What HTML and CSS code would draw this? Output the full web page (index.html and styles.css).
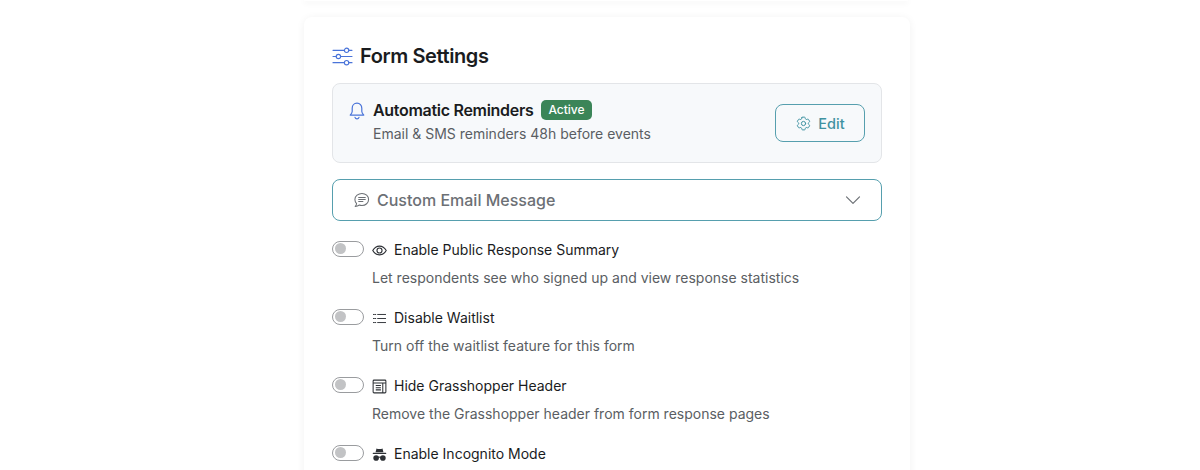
FILE: index.html
```html
<!DOCTYPE html>
<html lang="en">
<head>
    <meta charset="UTF-8">
    <title>Form Settings</title>
    <link rel="stylesheet" href="styles.css">
</head>
<body>
    <div class="page">
        <div class="prev-card"></div>

        <section class="card">
            <h2 class="card-title">
                <svg class="title-icon" viewBox="0 0 22 20" fill="none" stroke="currentColor" stroke-width="1.2" stroke-linecap="round">
                    <path d="M1 3.5h12M17.6 3.5H21"/>
                    <circle cx="15.3" cy="3.5" r="2.3"/>
                    <path d="M1 10h3.4M9 10h12"/>
                    <circle cx="6.7" cy="10" r="2.3"/>
                    <path d="M1 16.5h12M17.6 16.5H21"/>
                    <circle cx="15.3" cy="16.5" r="2.3"/>
                </svg>
                Form Settings
            </h2>

            <div class="reminders">
                <svg class="bell-icon" viewBox="0 0 16 18" fill="none" stroke="currentColor" stroke-width="1.2" stroke-linecap="round" stroke-linejoin="round">
                    <path d="M8 1.2c-2.9 0-4.800 2.200-4.800 5v3.300c0 1.200-.9 2.400-2 3.600h13.600c-1.100-1.200-2-2.400-2-3.600V6.200c0-2.800-1.900-5-4.800-5z"/>
                    <path d="M6 15.300c.3 1 1.100 1.500 2 1.500s1.700-.5 2-1.500"/>
                </svg>
                <div class="reminders-text">
                    <div class="reminders-head">
                        <span class="reminders-title">Automatic Reminders</span>
                        <span class="badge">Active</span>
                    </div>
                    <div class="reminders-sub">Email &amp; SMS reminders 48h before events</div>
                </div>
                <button class="edit-btn">
                    <svg class="gear-icon" viewBox="0 0 24 24" fill="none" stroke="currentColor" stroke-width="1.4" stroke-linecap="round" stroke-linejoin="round">
                        <path d="M9.594 3.940c.09-.542.56-.94 1.110-.94h2.593c.55 0 1.020.398 1.110.94l.213 1.281c.063.374.313.686.645.870.074.040.147.083.22.127.325.196.72.257 1.075.124l1.217-.456a1.125 1.125 0 0 1 1.370.49l1.296 2.247a1.125 1.125 0 0 1-.26 1.431l-1.003.827c-.293.241-.438.613-.43.992a7.723 7.723 0 0 1 0 .255c-.008.378.137.75.43.991l1.004.827c.424.35.534.955.26 1.430l-1.298 2.247a1.125 1.125 0 0 1-1.369.491l-1.217-.456c-.355-.133-.75-.072-1.076.124a6.470 6.470 0 0 1-.22.128c-.331.183-.581.495-.644.869l-.213 1.281c-.09.543-.56.94-1.110.94h-2.594c-.55 0-1.019-.398-1.110-.94l-.213-1.281c-.062-.374-.312-.686-.644-.87a6.520 6.520 0 0 1-.22-.127c-.325-.196-.72-.257-1.076-.124l-1.217.456a1.125 1.125 0 0 1-1.369-.49l-1.297-2.247a1.125 1.125 0 0 1 .26-1.431l1.004-.827c.292-.24.437-.613.43-.991a6.932 6.932 0 0 1 0-.255c.007-.38-.138-.751-.43-.992l-1.004-.827a1.125 1.125 0 0 1-.26-1.430l1.297-2.247a1.125 1.125 0 0 1 1.370-.491l1.216.456c.356.133.751.072 1.076-.124.072-.044.146-.086.22-.128.332-.183.582-.495.644-.869l.214-1.280z"/>
                        <circle cx="12" cy="12" r="3"/>
                    </svg>
                    Edit
                </button>
            </div>

            <div class="accordion">
                <svg class="chat-icon" viewBox="0 0 18 18" fill="none" stroke="currentColor" stroke-width="1.1" stroke-linecap="round" stroke-linejoin="round">
                    <path d="M9.500 1.500c3.900 0 7 2.800 7 6.400s-3.100 6.400-7 6.400c-1 0-1.900-.2-2.700-.5-1.300.9-2.700 1.400-4.500 1.500.9-.9 1.400-1.900 1.500-3.100C2.500 10.900 2 9.400 2 7.900 2 4.300 5.600 1.500 9.500 1.500z"/>
                    <path d="M6 5.900h7M6 8h7M6 10.100h4.500"/>
                </svg>
                <span class="accordion-label">Custom Email Message</span>
                <svg class="chevron" viewBox="0 0 16 10" fill="none" stroke="currentColor" stroke-width="1.2" stroke-linecap="round" stroke-linejoin="round">
                    <path d="M1.500 1.800L8 8.300l6.500-6.500"/>
                </svg>
            </div>

            <div class="option">
                <div class="option-row">
                    <span class="toggle"></span>
                    <svg class="option-icon" viewBox="0 0 16 16" fill="none" stroke="currentColor" stroke-width="1.2" stroke-linejoin="round">
                        <path d="M.8 8c1.800-3.100 4.300-4.700 7.200-4.700s5.400 1.600 7.200 4.700c-1.800 3.100-4.300 4.700-7.200 4.700S2.600 11.100.8 8z"/>
                        <circle cx="8" cy="8" r="2.700"/>
                    </svg>
                    <span class="option-label">Enable Public Response Summary</span>
                </div>
                <p class="option-desc">Let respondents see who signed up and view response statistics</p>
            </div>

            <div class="option">
                <div class="option-row">
                    <span class="toggle"></span>
                    <svg class="option-icon" viewBox="0 0 16 16" fill="none" stroke="currentColor" stroke-width="1" stroke-linecap="round">
                        <path d="M6 3.700h8.500M6 8h8.500M6 12.300h8.500"/>
                        <path d="M1.500 3.700h2.500M1.500 8h2.500M1.500 12.300h2.500" stroke-dasharray="1 .9"/>
                    </svg>
                    <span class="option-label">Disable Waitlist</span>
                </div>
                <p class="option-desc">Turn off the waitlist feature for this form</p>
            </div>

            <div class="option">
                <div class="option-row">
                    <span class="toggle"></span>
                    <svg class="option-icon" viewBox="0 0 16 16" fill="none" stroke="currentColor" stroke-width="1.1">
                        <rect x="1.200" y="1.200" width="13.600" height="13.600" rx="1"/>
                        <path d="M1.200 4.300h13.600M4 7h5.500M4 9.300h5.500M4 11.600h5.500M11.500 4.300v10.500"/>
                    </svg>
                    <span class="option-label">Hide Grasshopper Header</span>
                </div>
                <p class="option-desc">Remove the Grasshopper header from form response pages</p>
            </div>

            <div class="option">
                <div class="option-row">
                    <span class="toggle"></span>
                    <svg class="option-icon" viewBox="0 0 16 16" fill="currentColor">
                        <path d="M4.800 1.500c.9.4 1.900.5 3.200.5s2.300-.1 3.200-.5l1 4H3.800z"/>
                        <rect x=".8" y="6" width="14.400" height="1.500" rx=".6"/>
                        <circle cx="4.400" cy="11.700" r="3"/>
                        <circle cx="11.600" cy="11.700" r="3"/>
                        <rect x="6.500" y="10.300" width="3" height="1.100"/>
                    </svg>
                    <span class="option-label">Enable Incognito Mode</span>
                </div>
            </div>
        </section>
    </div>
</body>
</html>
```

FILE: styles.css
```css
html, body {
    height: 470px;
    overflow: hidden;
}

body {
    margin: 0;
    background-color: #ffffff;
    color: #1a1c1e;
    font-family: "Inter", "Liberation Sans", sans-serif;
}

.page {
    width: 606px;
    margin-left: 304px;
}

.prev-card {
    width: 604px;
    height: 1px;
    margin-bottom: 16px;
    background-color: #ffffff;
    box-shadow: 0 1px 6px rgba(0, 0, 0, 0.16);
}

.card {
    padding: 28px 28px 40px;
    background-color: #ffffff;
    border-radius: 8px;
    box-shadow: 0 1px 8px rgba(0, 0, 0, 0.06);
}

.card-title {
    display: flex;
    align-items: center;
    gap: 7px;
    height: 22px;
    margin: 0 0 16px;
    font-size: 20px;
    font-weight: 600;
    letter-spacing: -0.4px;
    line-height: 22px;
}

.title-icon {
    width: 21px;
    height: 19px;
    color: #4a74d9;
}

.reminders {
    display: flex;
    align-items: center;
    height: 78px;
    padding: 0 16px;
    background-color: #f7f9fb;
    border: 1px solid #e3e5e8;
    border-radius: 8px;
}

.bell-icon {
    align-self: flex-start;
    width: 16px;
    height: 18px;
    margin-top: 18px;
    color: #4a74d9;
}

.reminders-text {
    flex: 1;
    margin-left: 8px;
    padding-bottom: 3px;
}

.reminders-head {
    display: flex;
    align-items: center;
    gap: 8px;
}

.reminders-title {
    font-size: 16px;
    font-weight: 600;
    letter-spacing: -0.3px;
}

.badge {
    padding: 2px 7px;
    background-color: #3b8558;
    border-radius: 5px;
    color: #ffffff;
    font-size: 12px;
    font-weight: 500;
    line-height: 16px;
}

.reminders-sub {
    margin-top: 4px;
    color: #5a5e63;
    font-size: 14px;
    line-height: 20px;
}

.edit-btn {
    display: flex;
    align-items: center;
    justify-content: center;
    gap: 6px;
    width: 90px;
    height: 38px;
    background-color: transparent;
    border: 1px solid #569fae;
    border-radius: 8px;
    color: #3f92a1;
    font-family: inherit;
    font-size: 14.5px;
    font-weight: 500;
}

.gear-icon {
    width: 17px;
    height: 17px;
}

.accordion {
    display: flex;
    align-items: center;
    height: 40px;
    margin: 16px 0 19px;
    padding: 0 20px;
    border: 1px solid #569fae;
    border-radius: 8px;
    color: #6c7075;
}

.chat-icon {
    width: 17px;
    height: 17px;
}

.accordion-label {
    flex: 1;
    margin-left: 7px;
    font-size: 16px;
    font-weight: 500;
    line-height: 19px;
}

.chevron {
    width: 16px;
    height: 10px;
}

.option {
    height: 68px;
}

.option-row {
    display: flex;
    align-items: center;
    height: 20px;
}

.toggle {
    box-sizing: border-box;
    position: relative;
    width: 32px;
    height: 16px;
    margin-bottom: 2px;
    border: 1.5px solid #9a9c9f;
    border-radius: 8px;
    background-color: #ffffff;
}

.toggle::after {
    content: "";
    position: absolute;
    top: 1px;
    left: 1.5px;
    width: 11px;
    height: 11px;
    border-radius: 50%;
    background-color: #c2c3c5;
}

.option-icon {
    width: 15px;
    height: 15px;
    margin-left: 8px;
    color: #2d3035;
}

.option-label {
    margin-left: 7px;
    font-size: 14px;
    line-height: 20px;
}

.option-desc {
    margin: 8px 0 0 40px;
    color: #5a5e63;
    font-size: 14px;
    line-height: 20px;
}
```
